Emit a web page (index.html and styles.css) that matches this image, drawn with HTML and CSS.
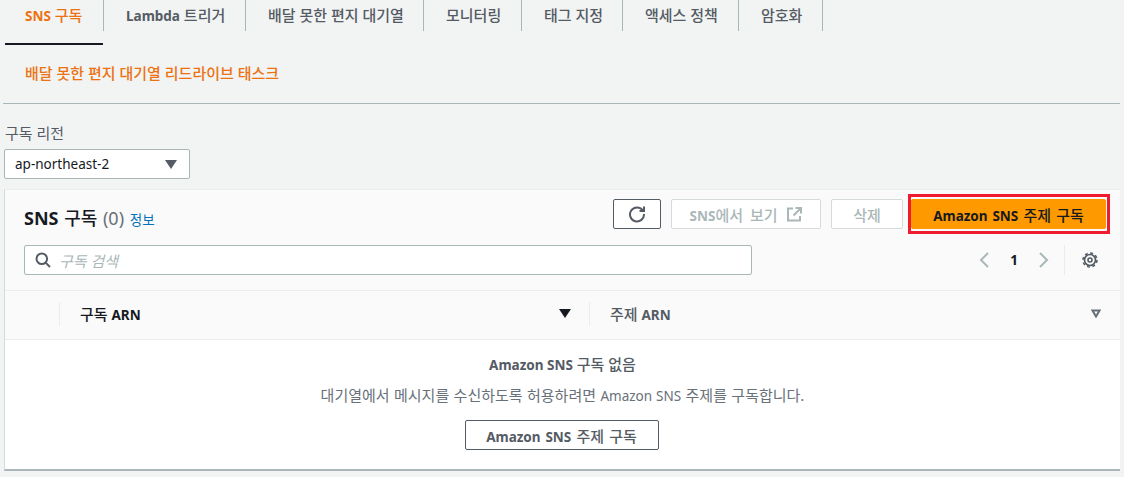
FILE: index.html
```html
<!DOCTYPE html>
<html lang="ko">
<head>
    <meta charset="UTF-8">
    <title>SNS 구독</title>
    <link rel="stylesheet" href="styles.css">
</head>
<body>
    <ul class="tabs">
        <li class="tab tab-active"><span class="en">SNS</span> 구독</li>
        <li class="tab"><span class="en">Lambda</span> 트리거</li>
        <li class="tab">배달 못한 편지 대기열</li>
        <li class="tab">모니터링</li>
        <li class="tab">태그 지정</li>
        <li class="tab">액세스 정책</li>
        <li class="tab">암호화</li>
    </ul>

    <div class="subTask"><a class="subTaskLink">배달 못한 편지 대기열 리드라이브 태스크</a></div>

    <div class="regionField">
        <label class="regionLabel">구독 리전</label>
        <div class="regionSelect">
            <span>ap-northeast-2</span>
            <span class="caret"></span>
        </div>
    </div>

    <section class="card">
        <div class="cardTop">
            <h2 class="cardTitle"><span class="titleEn">SNS</span> 구독 <span class="count">(0)</span> <a class="infoLink">정보</a></h2>
            <div class="actions">
                <button class="btn btn-icon" aria-label="새로 고침">
                    <svg width="18" height="18" viewBox="0 0 18 18" fill="none" stroke="#545b64" stroke-width="2">
                        <path d="M14.6 5.2A7 7 0 1 0 16 9"/>
                        <path d="M16 1.5V6h-4.5"/>
                    </svg>
                </button>
                <button class="btn btn-disabled btn-sns"><span><span class="en">SNS</span>에서 보기</span>
                    <svg width="15" height="15" viewBox="0 0 15 15" fill="none" stroke="#aab7b8" stroke-width="2">
                        <path d="M6 1.5H1v12h12V9"/>
                        <path d="M8.5 1H14v5.5M14 1L6.5 8.5"/>
                    </svg>
                </button>
                <button class="btn btn-disabled btn-delete">삭제</button>
                <div class="highlight">
                    <button class="btn btn-primary"><span><span class="en">Amazon SNS</span> 주제 구독</span></button>
                </div>
            </div>
        </div>

        <div class="cardFilter">
            <div class="search">
                <svg width="16" height="16" viewBox="0 0 16 16" fill="none" stroke="#545b64" stroke-width="2">
                    <circle cx="6.8" cy="6.8" r="5.3"/>
                    <path d="M10.6 10.6L15 15"/>
                </svg>
                <span class="searchHint">구독 검색</span>
            </div>
            <div class="pager">
                <svg width="12" height="18" viewBox="0 0 12 18" fill="none" stroke="#aab7b8" stroke-width="2">
                    <path d="M10 2L3 9l7 7"/>
                </svg>
                <span class="pageNum">1</span>
                <svg width="12" height="18" viewBox="0 0 12 18" fill="none" stroke="#aab7b8" stroke-width="2">
                    <path d="M2 2l7 7-7 7"/>
                </svg>
                <span class="pagerLine"></span>
                <svg class="gear" width="16" height="16" viewBox="0 0 16 16" fill="none" stroke="#545b64">
                    <circle cx="8" cy="8" r="5.5" stroke-width="1.7"/>
                    <circle cx="8" cy="8" r="7" stroke-width="1.6" stroke-dasharray="2.9 2.6"/>
                    <circle cx="8" cy="8" r="2" stroke-width="1.6"/>
                </svg>
            </div>
        </div>

        <div class="tableHead">
            <div class="headCell headCell-sorted">
                <span>구독 <span class="en">ARN</span></span>
                <span class="sortDown"></span>
            </div>
            <div class="headCell headCell-plain">
                <span>주제 <span class="en">ARN</span></span>
                <svg width="10" height="9" viewBox="0 0 10 9" fill="none" stroke="#687078" stroke-width="2">
                    <path d="M1.5 1.5h7L5 7.5z"/>
                </svg>
            </div>
        </div>

        <div class="empty">
            <div class="emptyTitle"><span class="en">Amazon SNS</span> 구독 없음</div>
            <p class="emptyText">대기열에서 메시지를 수신하도록 허용하려면 <span class="en">Amazon SNS</span> 주제를 구독합니다.</p>
            <button class="btn btn-outline"><span><span class="en">Amazon SNS</span> 주제 구독</span></button>
        </div>
    </section>
</body>
</html>
```

FILE: styles.css
```css
* {
    box-sizing: border-box;
}

body {
    margin: 0;
    height: 477px;
    overflow: hidden;
    background-color: #f2f3f3;
    color: #16191f;
    font-family: "Noto Sans", "Noto Sans CJK KR", sans-serif;
    font-size: 15px;
}

/* Latin words run a bit smaller than the hangul around them */
.en {
    font-size: 0.9em;
}

.tab .en, .btn .en, .tableHead .en, .emptyTitle .en {
    font-weight: 700;
}

/* Tabs */
.tabs {
    display: flex;
    list-style: none;
    margin: 0;
    padding: 0 0 0 5px;
    height: 46px;
}

.tab {
    height: 31px;
    padding-left: 22px;
    border-right: 1px solid #aab7b8;
    color: #545b64;
    font-weight: 500;
    line-height: 31px;
}

.tab:nth-child(2) { width: 142px; }
.tab:nth-child(3) { width: 178px; }
.tab:nth-child(4) { width: 98px; }
.tab:nth-child(5) { width: 101px; }
.tab:nth-child(6) { width: 116px; }
.tab:nth-child(7) { width: 84px; }

.tab-active {
    position: relative;
    padding-left: 20px;
    width: 99px;
    color: #ec7211;
}

.tab-active::after {
    content: "";
    position: absolute;
    left: 0;
    right: 0;
    top: 43px;
    height: 2px;
    background-color: #16191f;
}

/* Redrive task link */
.subTask {
    height: 58px;
    margin: 0 4px 0 3px;
    padding: 16px 0 0 22px;
    border-bottom: 1px solid #aab7b8;
    line-height: 22px;
}

.subTaskLink {
    color: #ec7211;
    font-weight: 500;
}

/* Region */
.regionField {
    padding: 19px 0 0 4px;
    height: 85px;
}

.regionLabel {
    display: block;
    color: #545b64;
    line-height: 20px;
    margin-bottom: 6px;
    padding-left: 1px;
}

.regionSelect {
    display: flex;
    justify-content: space-between;
    align-items: center;
    width: 186px;
    height: 30px;
    padding: 0 12px 0 10px;
    background-color: #fff;
    border: 1px solid #aab7b8;
    border-radius: 2px;
    font-size: 13.5px;
}

.caret {
    border-left: 6px solid transparent;
    border-right: 6px solid transparent;
    border-top: 9px solid #545b64;
}

/* Card */
.card {
    margin: 0 4px;
    height: 282px;
    background-color: #fafafa;
    border-left: 1px solid #d5dbdb;
    border-top: 1px solid #eaeded;
    border-bottom: 2px solid #aab7b8;
}

.cardTop {
    display: flex;
    justify-content: space-between;
    height: 55px;
    padding: 9px 10px 0 19px;
}

.cardTitle {
    margin: 0;
    padding-top: 7px;
    font-size: 18px;
    font-weight: 500;
    line-height: 24px;
    word-spacing: 1px;
}

.titleEn {
    font-weight: 700;
}

.count {
    color: #687078;
    font-weight: 400;
}

.infoLink {
    color: #0073bb;
    font-size: 13.5px;
    font-weight: 400;
}

.actions {
    display: flex;
    gap: 10px;
    align-items: center;
    height: 30px;
}

.btn {
    height: 30px;
    border-radius: 2px;
    font-family: inherit;
    font-size: 15px;
    font-weight: 500;
    word-spacing: 1.3px;
    background-color: #fff;
    display: inline-flex;
    align-items: center;
    justify-content: center;
    gap: 10px;
    padding: 0;
}

.btn-icon {
    width: 48px;
    border: 1px solid #545b64;
}

.btn-disabled {
    border: 1px solid #d5dbdb;
    color: #aab7b8;
}

.btn-sns {
    width: 150px;
    word-spacing: 3px;
}

.btn-delete {
    width: 72px;
}

.highlight {
    margin: -5px 0 -5px -5px;
    padding: 2px 1px 2px 0;
    border: 3px solid #ee1c2e;
}

.btn-primary {
    display: flex;
    width: 195px;
    background-color: #ff9900;
    border: 1px solid #ff9900;
    color: #16191f;
}

.cardFilter {
    display: flex;
    justify-content: space-between;
    height: 46px;
    padding: 0 22px 0 19px;
    border-bottom: 1px solid #eaeded;
}

.search {
    display: flex;
    align-items: center;
    gap: 8px;
    width: 728px;
    height: 30px;
    padding-left: 10px;
    background-color: #fff;
    border: 1px solid #aab7b8;
    border-radius: 2px;
}

.searchHint {
    color: #aab7b8;
    font-style: italic;
}

.pager {
    display: flex;
    align-items: center;
    height: 30px;
}

.pageNum {
    width: 48px;
    text-align: center;
    font-weight: 700;
    font-size: 13.5px;
}

.pagerLine {
    width: 1px;
    height: 30px;
    margin: 0 17px 0 14px;
    background-color: #eaeded;
}

/* Table */
.tableHead {
    display: flex;
    height: 49px;
    padding: 0 0 3px 54px;
    align-items: center;
    border-bottom: 1px solid #eaeded;
    font-weight: 500;
}

.headCell {
    display: flex;
    justify-content: space-between;
    align-items: center;
    height: 24px;
    padding-left: 20px;
    border-left: 1px solid #eaeded;
}

.headCell-sorted {
    width: 530px;
    padding-right: 18px;
}

.headCell-plain {
    flex: 1;
    padding-right: 19px;
    color: #545b64;
}

.sortDown {
    border-left: 6px solid transparent;
    border-right: 6px solid transparent;
    border-top: 9px solid #16191f;
}

.empty {
    display: flex;
    flex-direction: column;
    align-items: center;
    height: 129px;
    padding-top: 14px;
    background-color: #fff;
}

.emptyTitle {
    color: #545b64;
    font-weight: 500;
    line-height: 20px;
}

.emptyText {
    margin: 10px 0 14px;
    color: #687078;
    line-height: 20px;
    word-spacing: 0.5px;
}

.btn-outline {
    width: 194px;
    margin-right: 2px;
    border: 1px solid #545b64;
    color: #545b64;
}
```
